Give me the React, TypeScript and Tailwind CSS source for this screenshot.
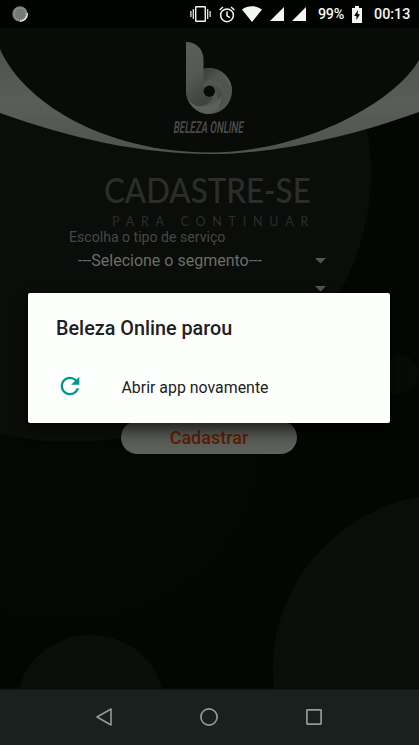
import React from "react";
import { MdRefresh } from "react-icons/md";

function Backdrop() {
  return (
    <svg className="absolute inset-0 h-[745px] w-[419px]" viewBox="0 0 419 745" aria-hidden="true">
      <defs>
        <linearGradient id="swoosh" x1="0" y1="0" x2="0" y2="1">
          <stop offset="0" stopColor="#4b4d49" />
          <stop offset="0.6" stopColor="#5b5d59" />
          <stop offset="1" stopColor="#50524e" />
        </linearGradient>
      </defs>
      <ellipse cx="65" cy="440" rx="197" ry="181" fill="#050704" />
      <ellipse cx="70" cy="173" rx="301" ry="269" fill="#0b0d0a" />
      <circle cx="398" cy="374" r="20" fill="#080a07" />
      <ellipse cx="90.500" cy="703" rx="73" ry="68" fill="#0b0d0a" />
      <ellipse cx="455" cy="668" rx="182" ry="175" fill="#0b0d0a" />
      <path d="M0 28H419V112C350 137 275 154 210 154C140 154 70 138 0 113Z" fill="url(#swoosh)" />
      <path d="M0 28H419V60C395 102 305 152 210 152.500C100 152 22 100 0 49Z" fill="#090b08" />
    </svg>
  );
}

function StatusBar() {
  return (
    <header className="relative flex h-7 items-center bg-[#010301] pl-3 text-[14.300px] font-medium text-[#f4f6f3]">
      <svg className="h-4 w-4" viewBox="0 0 16 16" fill="none">
        <circle cx="8" cy="8" r="7.700" fill="#777975" />
        <circle cx="8" cy="8" r="6" stroke="#a5a7a3" strokeWidth="1.200" strokeDasharray="1 1" />
        <path d="M15.200 7A7.200 7.200 0 0 1 8 15.200" stroke="#eceeeb" strokeWidth="1.300" />
      </svg>
      <svg className="ml-[162px] h-4 w-[21px]" viewBox="0 0 21 16" fill="none" stroke="currentColor">
        <rect x="5.700" y="0.700" width="9.600" height="14.600" rx="0.500" strokeWidth="1.400" />
        <path d="M3.300 3v10M17.700 3v10" strokeWidth="1.200" />
        <path d="M.9 5v6M20.100 5v6" strokeWidth="1.200" />
      </svg>
      <svg className="ml-2 h-[17px] w-4" viewBox="0 0 16 17" fill="none" stroke="currentColor" strokeWidth="1.500">
        <circle cx="8" cy="9.300" r="6.400" />
        <path d="M8 5.500v4.300l3 1.800M.6 4 4 1M15.400 4 12 1" />
      </svg>
      <svg className="ml-[7px] h-4 w-5" viewBox="0 0 20 16" fill="currentColor">
        <path d="M0 3.500C6-.7 14-.7 20 3.500L10 16Z" />
      </svg>
      <svg className="ml-2 h-[14px] w-[14px]" viewBox="0 0 14 14" fill="currentColor">
        <path d="M14 0V14H0Z" />
      </svg>
      <svg className="ml-2 h-[14px] w-[14px]" viewBox="0 0 14 14" fill="currentColor">
        <path d="M14 0V14H0Z" />
      </svg>
      <span className="ml-3 w-[34px] pt-px tracking-[-0.300px]">99%</span>
      <svg className="h-[17px] w-[10px]" viewBox="0 0 10 17">
        <path d="M3 0h4v2h3v15H0V2h3Z" fill="#f4f6f3" />
        <path d="M6 4 2 10h2.400v4L8 8.200H5.600Z" fill="#010301" />
      </svg>
      <span className="ml-3 pt-px">00:13</span>
    </header>
  );
}

function Logo() {
  return (
    <svg className="ml-[150px] mt-[14px] block h-[98px] w-[120px] overflow-visible" viewBox="150 42 120 98" role="img" aria-label="Beleza Online">
      <defs>
        <linearGradient id="stem" x1="0" y1="0" x2="0.300" y2="1">
          <stop offset="0" stopColor="#5c5e5a" />
          <stop offset="0.550" stopColor="#565854" />
          <stop offset="1" stopColor="#41433f" />
        </linearGradient>
        <linearGradient id="petal" x1="0" y1="0" x2="1" y2="0.600">
          <stop offset="0" stopColor="#3a3c38" />
          <stop offset="0.500" stopColor="#50524e" />
          <stop offset="1" stopColor="#5c5e5a" />
        </linearGradient>
        <linearGradient id="sweep" x1="0" y1="0" x2="1" y2="1">
          <stop offset="0" stopColor="#565854" />
          <stop offset="1" stopColor="#42443f" />
        </linearGradient>
      </defs>
      <circle cx="209" cy="91" r="23" fill="#555753" />
      <path d="M203 69.500C217 64 232 76 232 91C230 83 223 78 214 79Q207 79 203 84Z" fill="url(#petal)" />
      <path d="M204 85C210 78 221 80 223.500 90Q225 100 217 110C228 106 233 98 231 87C226 76 214 74 204 82Z" fill="#51534f" />
      <path d="M206 84C216 81 224 90 223 99Q222 107 214 112Q221 101 215 91Z" fill="url(#sweep)" />
      <path d="M187 97Q192 105 203 106C212 106 219 101 222 95C222 107 216 114 206 114Q192 111 187 97Z" fill="#5d5f5b" />
      <path d="M186 42C196 42 203.500 49 203.500 59V91Q204 99 213 97C210 105 200 109 193 104Q187 100 186 92Z" fill="url(#stem)" />
      <circle cx="209.300" cy="91.300" r="5.700" fill="#090b08" />
      <text
        transform="translate(173 133) skewX(-8)"
        fill="#4a4c48"
        fontFamily="Roboto, sans-serif"
        fontWeight="600"
        fontSize="16.500"
        textLength="70"
        lengthAdjust="spacingAndGlyphs"
      >
        BELEZA ONLINE
      </text>
    </svg>
  );
}

function Caret() {
  return (
    <svg className="h-[6px] w-[11px]" viewBox="0 0 11 6" fill="#555753">
      <path d="M0 0H11L5.500 5.500Z" />
    </svg>
  );
}

function SignupForm() {
  return (
    <main className="flex flex-1 flex-col">
      <h1 className="mt-[32px] ml-[104px] origin-left scale-x-[0.92] font-['Lato'] text-[34px] leading-9 font-medium whitespace-nowrap text-[#2b2d2a]">
        CADASTRE-SE
      </h1>
      <p className="mt-[6px] ml-[112px] font-['Lato'] text-[12.500px] leading-4 tracking-[6.800px] whitespace-nowrap text-[#2b2d2a]">
        PARA CONTINUAR
      </p>
      <label className="mt-[-2px] ml-[69px] text-[14.100px] leading-[18px] text-[#464845]">Escolha o tipo de serviço</label>
      <div className="mt-[3px] ml-[78px] flex h-6 w-[248px] items-center justify-between text-base text-[#6b6d69]">
        <span className="whitespace-nowrap">---Selecione o segmento---</span>
        <Caret />
      </div>
      <div className="mt-[4px] ml-[78px] flex h-6 w-[248px] items-center justify-end">
        <Caret />
      </div>
      <button className="mt-[120px] ml-[121px] h-[33px] w-[176px] rounded-full bg-linear-to-b from-[#4c4e4a] to-[#60625e] text-[18px] font-medium text-[#5a1c05]">
        Cadastrar
      </button>
    </main>
  );
}

function CrashDialog() {
  return (
    <section
      role="dialog"
      className="absolute top-[293px] left-[28px] h-[130px] w-[362px] rounded-[2px] bg-[#fdfffc] px-7 text-[#1e211e] shadow-[0_6px_14px_rgba(0,0,0,0.6)]"
    >
      <h2 className="pt-[23px] text-[19.800px] leading-[26px] font-medium">Beleza Online parou</h2>
      <button className="mt-[30px] flex h-7 items-center text-[15.900px]">
        <MdRefresh className="h-7 w-7 text-[#009886]" />
        <span className="ml-[37.500px] pt-[3px]">Abrir app novamente</span>
      </button>
    </section>
  );
}

function NavigationBar() {
  return (
    <nav className="relative flex h-14 items-center border-t border-[#121714] bg-[#19201d] pb-[2px] pl-[96px]">
      <svg className="h-[18px] w-4" viewBox="0 0 16 18" fill="none" stroke="#979996" strokeWidth="1.600" strokeLinejoin="round">
        <path d="M15 1V17L1 9Z" />
      </svg>
      <svg className="ml-[88px] h-[18px] w-[18px]" viewBox="0 0 18 18" fill="none" stroke="#979996" strokeWidth="1.700">
        <circle cx="9" cy="9" r="8.100" />
      </svg>
      <svg className="ml-[88px] h-4 w-4" viewBox="0 0 16 16" fill="none" stroke="#979996" strokeWidth="1.700">
        <rect x="0.900" y="0.900" width="14.200" height="14.200" rx="0.500" />
      </svg>
    </nav>
  );
}

export default function App() {
  return (
    <div className="relative flex h-[745px] w-[419px] flex-col overflow-hidden bg-[#040603] font-['Roboto',sans-serif]">
      <Backdrop />
      <StatusBar />
      <div className="relative flex flex-1 flex-col">
        <Logo />
        <SignupForm />
      </div>
      <CrashDialog />
      <NavigationBar />
    </div>
  );
}
